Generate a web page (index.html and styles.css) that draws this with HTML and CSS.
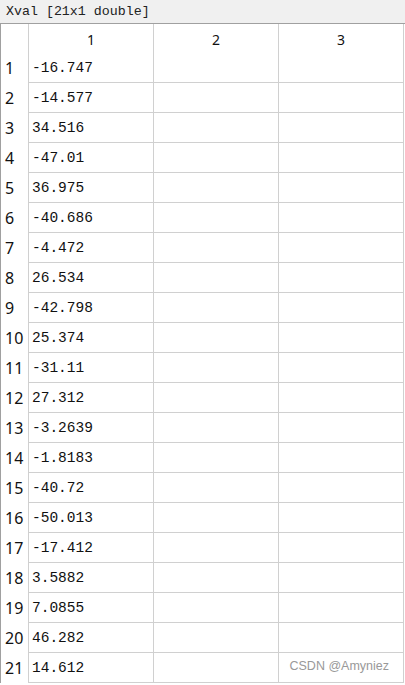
FILE: index.html
```html
<!DOCTYPE html>
<html>
<head>
<meta charset="utf-8">
<link rel="stylesheet" href="styles.css">
</head>
<body>
<div class="title">Xval [21x1 double]</div>
<div class="grid">
  <div class="rh hdr"></div><div class="ch">1</div><div class="ch">2</div><div class="ch">3</div>
  <div class="rh">1</div><div class="c v">-16.747</div><div class="c"></div><div class="c"></div>
  <div class="rh">2</div><div class="c v">-14.577</div><div class="c"></div><div class="c"></div>
  <div class="rh">3</div><div class="c v">34.516</div><div class="c"></div><div class="c"></div>
  <div class="rh">4</div><div class="c v">-47.01</div><div class="c"></div><div class="c"></div>
  <div class="rh">5</div><div class="c v">36.975</div><div class="c"></div><div class="c"></div>
  <div class="rh">6</div><div class="c v">-40.686</div><div class="c"></div><div class="c"></div>
  <div class="rh">7</div><div class="c v">-4.472</div><div class="c"></div><div class="c"></div>
  <div class="rh">8</div><div class="c v">26.534</div><div class="c"></div><div class="c"></div>
  <div class="rh">9</div><div class="c v">-42.798</div><div class="c"></div><div class="c"></div>
  <div class="rh">10</div><div class="c v">25.374</div><div class="c"></div><div class="c"></div>
  <div class="rh">11</div><div class="c v">-31.11</div><div class="c"></div><div class="c"></div>
  <div class="rh">12</div><div class="c v">27.312</div><div class="c"></div><div class="c"></div>
  <div class="rh">13</div><div class="c v">-3.2639</div><div class="c"></div><div class="c"></div>
  <div class="rh">14</div><div class="c v">-1.8183</div><div class="c"></div><div class="c"></div>
  <div class="rh">15</div><div class="c v">-40.72</div><div class="c"></div><div class="c"></div>
  <div class="rh">16</div><div class="c v">-50.013</div><div class="c"></div><div class="c"></div>
  <div class="rh">17</div><div class="c v">-17.412</div><div class="c"></div><div class="c"></div>
  <div class="rh">18</div><div class="c v">3.5882</div><div class="c"></div><div class="c"></div>
  <div class="rh">19</div><div class="c v">7.0855</div><div class="c"></div><div class="c"></div>
  <div class="rh">20</div><div class="c v">46.282</div><div class="c"></div><div class="c"></div>
  <div class="rh">21</div><div class="c v">14.612</div><div class="c"></div><div class="c wm-cell"><span class="wm">CSDN @Amyniez</span></div>
</div>
</body>
</html>
```
FILE: styles.css
```css
html, body {
  margin: 0;
  padding: 0;
  background: #ffffff;
  width: 405px;
  height: 685px;
  overflow: hidden;
}
.title {
  box-sizing: border-box;
  background: #f0f0f0;
  border-bottom: 1px solid #a0a0a0;
  height: 24px;
  padding-left: 6px;
  font-family: "Liberation Mono", monospace;
  font-size: 13.3px;
  line-height: 23px;
  color: #222;
}
.grid {
  display: grid;
  grid-template-columns: 28px 125px 125px 125px;
  grid-template-rows: 29px;
  grid-auto-rows: 30px;
  border-left: 1px solid #a0a0a0;
  width: 403px;
}
.rh {
  border-right: 1px solid #d0d0d0;
  font-family: "Noto Sans", "Open Sans", sans-serif;
  font-size: 16px;
  color: #111;
  display: flex;
  align-items: center;
  padding-left: 4px;
  box-sizing: border-box;
}
.ch {
  border-right: 1px solid #d0d0d0;
  font-family: "Noto Sans", sans-serif;
  font-size: 14px;
  color: #111;
  display: flex;
  align-items: center;
  justify-content: center;
  padding-top: 2px;
}
.c {
  border-right: 1px solid #d0d0d0;
  border-bottom: 1px solid #d0d0d0;
  display: flex;
  align-items: center;
}
.v {
  font-family: "Liberation Mono", monospace;
  font-size: 14.5px;
  color: #111;
  padding-left: 3px;
}
.wm-cell {
  position: relative;
}
.wm {
  position: absolute;
  right: 14px;
  top: 6px;
  font-family: "Liberation Sans", sans-serif;
  font-size: 12.5px;
  color: #999;
}
```
